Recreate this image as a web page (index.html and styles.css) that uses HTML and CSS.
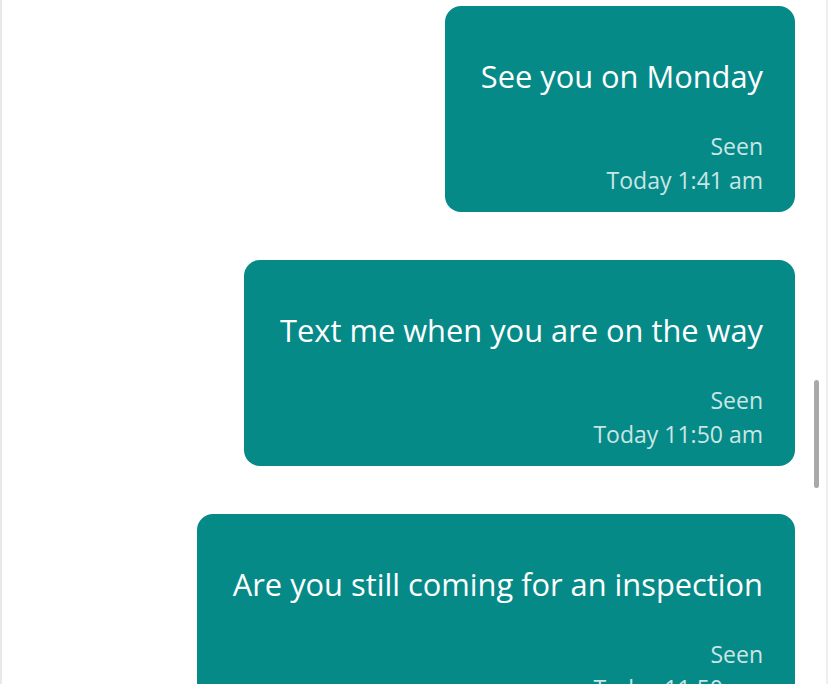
FILE: index.html
```html
<!DOCTYPE html>
<html lang="en">
<head>
  <meta charset="UTF-8" />
  <meta name="viewport" content="width=device-width, initial-scale=1.0"/>
  <title>Messages</title>
  <link rel="stylesheet" href="styles.css">
</head>
<body>
  <div class="chat">
    <div class="messages">
      <div class="bubble">
        <div class="text">See you on Monday</div>
        <div class="meta">Seen</div>
        <div class="meta">Today 1:41 am</div>
      </div>
      <div class="bubble">
        <div class="text">Text me when you are on the way</div>
        <div class="meta">Seen</div>
        <div class="meta">Today 11:50 am</div>
      </div>
      <div class="bubble">
        <div class="text">Are you still coming for an inspection</div>
        <div class="meta">Seen</div>
        <div class="meta">Today 11:50 am</div>
      </div>
    </div>
    <div class="scroll-thumb"></div>
  </div>
</body>
</html>
```

FILE: styles.css
```css
html, body {
  margin: 0;
  padding: 0;
  height: 100%;
  overflow: hidden;
}

body {
  font-family: "Open Sans", "Noto Sans", sans-serif;
  background: #fff;
}

.chat {
  position: relative;
  height: 100%;
  box-sizing: border-box;
  border-left: 2px solid #e8e8e8;
  border-right: 2px solid #efefef;
}

.messages {
  display: flex;
  flex-direction: column;
  align-items: flex-end;
  gap: 48px;
  padding: 6px 31px 0 0;
}

.bubble {
  background-color: #068a88;
  color: #fff;
  border-radius: 16px;
  padding: 48px 32px 15px 36px;
  text-align: right;
}

.text {
  font-size: 30.8px;
  line-height: 44px;
  margin-bottom: 31px;
  white-space: nowrap;
}

.meta {
  font-size: 23px;
  line-height: 34px;
  color: #c9e6e4;
}

.scroll-thumb {
  position: absolute;
  top: 380px;
  right: 7px;
  width: 5px;
  height: 108px;
  border-radius: 3px;
  background: #a9a9a9;
}
```
